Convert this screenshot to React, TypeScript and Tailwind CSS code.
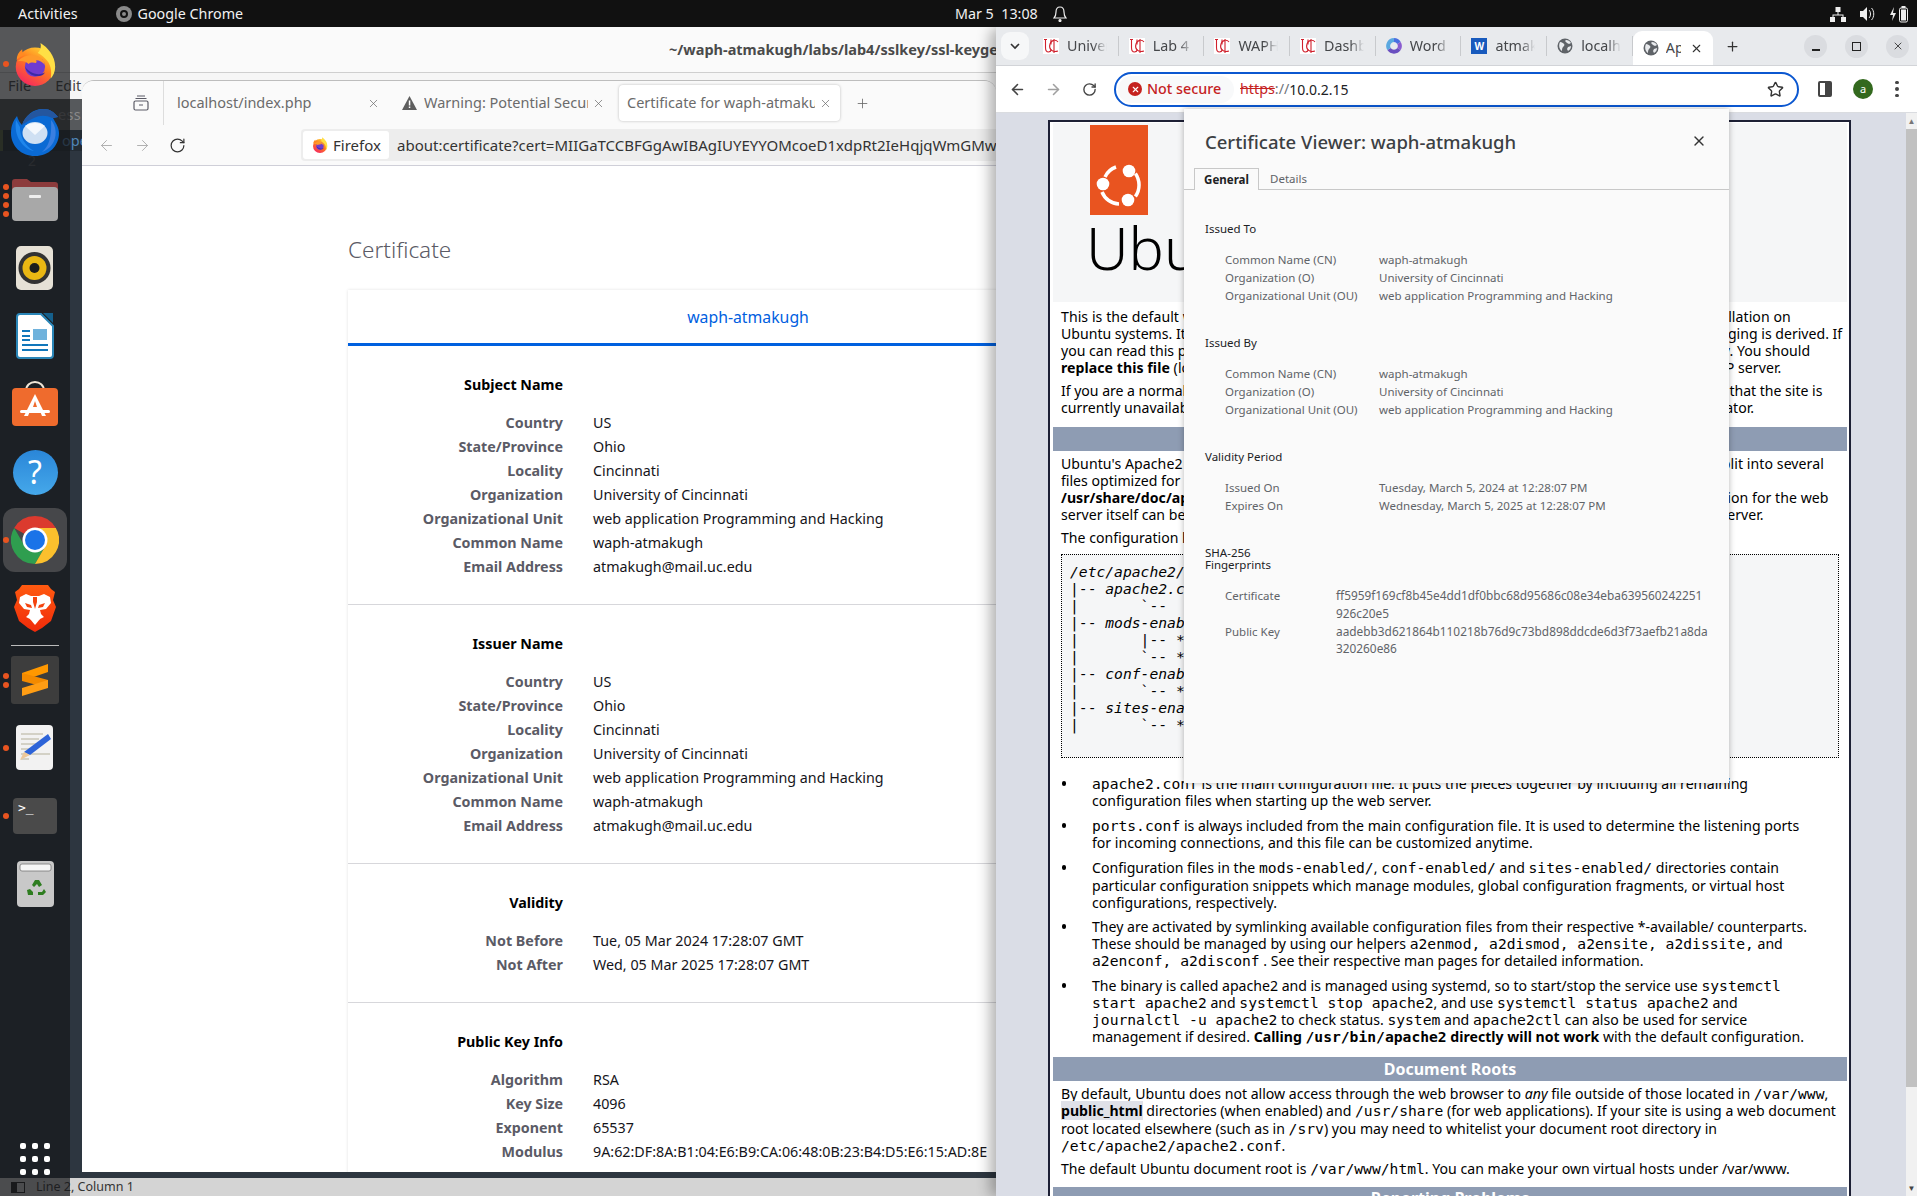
import { ArrowLeft, ArrowRight, Plus, RotateCw, Star, X } from "lucide-react"
import type { ReactNode } from "react"

function FirefoxIcon({ size }: { size: number }) {
    return (
        <svg width={size} height={size} viewBox="0 0 48 48">
            <defs>
                <linearGradient id="ffo" x1="0.85" y1="0.1" x2="0.3" y2="1">
                    <stop offset="0" stopColor="#ffcf30" />
                    <stop offset="0.45" stopColor="#ff7a1f" />
                    <stop offset="1" stopColor="#f5285e" />
                </linearGradient>
            </defs>
            <circle cx="24" cy="27" r="21" fill="url(#ffo)" />
            <path d="M30 1c8 5 16 14 16 26 0 5-2 10-5 13 2-8 0-17-6-22-3-3-6-5-8-6 3-3 4-7 3-11z" fill="#ffdf45" />
            <path d="M4 20c0-5 2-9 6-12 0 3 1 5 3 6-4 2-7 3-9 6z" fill="#ff8a22" />
            <circle cx="24" cy="27" r="11" fill="#6f3bd0" />
            <path d="M13 27c2 7 9 11 16 10 3 0 5-2 6-4-4 3-14 4-22-6z" fill="#3b2aa8" />
            <path d="M5 21c6-6 14-8 21-6 5 2 8 5 9 10-3-3-6-5-10-5 1 1 1 2 0 3-3-1-6-1-8 1-3-3-7-4-12-3z" fill="#ff9a2a" />
        </svg>
    )
}

function ChromeIcon({ size }: { size: number }) {
    return (
        <svg width={size} height={size} viewBox="0 0 48 48">
            <path d="M24 0A24 24 0 0 1 44.8 12H24A12 12 0 0 0 13.6 18L3.2 12A24 24 0 0 1 24 0z" fill="#db3a2e" />
            <path d="M3.2 12A24 24 0 0 0 24 48L34.4 30A12 12 0 0 1 13.6 30z" fill="#2f9e4f" />
            <path d="M44.8 12A24 24 0 0 1 24 48L34.4 30A12 12 0 0 0 24 12z" fill="#fbc02d" />
            <circle cx="24" cy="24" r="12.5" fill="#fff" />
            <circle cx="24" cy="24" r="10" fill="#1a73e8" />
        </svg>
    )
}

function UcIcon() {
    return (
        <svg width="16" height="16" viewBox="0 0 16 16">
            <rect width="16" height="16" fill="#fff" />
            <path d="M1 1.5h3M2.5 1.5v8c0 3 1.5 4.500 3 4.500s2.500-1 3-2.500M8 1.500v5" fill="none" stroke="#d0202c" strokeWidth="1.1" />
            <path d="M15 4c-2-2.500-6.500-2.500-8 2s1.500 9 8 7M11 1v14" fill="none" stroke="#d0202c" strokeWidth="1.1" />
        </svg>
    )
}

function GlobeIcon() {
    return (
        <svg width="16" height="16" viewBox="0 0 16 16">
            <circle cx="8" cy="8" r="7.5" fill="#5f6368" />
            <path d="M3 4c2 0 3 1 4 2s0 2-1 3-1 3-1 4C3 12 1 8 3 4zM9 2c2 0 4 1 5 3l-2 1-2-1-2-2zM11 9l3-1c0 2-1 4-3 5l-1-2z" fill="#e8eaed" />
        </svg>
    )
}

function ThunderbirdIcon() {
    return (
        <svg width="48" height="48" viewBox="0 0 48 48">
            <path d="M6 8c1 4 3 7 5 9C14 7 24 0 33 1c6 0 10 3 14 8l-5 1c2 4 6 9 6 15 0 13-10 23-24 23S0 38 0 25c0-7 2-12 6-17z" fill="#0a6ad4" />
            <path d="M11 17C14 7 24 1 33 1c6 0 10 3 14 8l-6 1c-6-3-12-3-18 0-5 2-9 5-12 7z" fill="#24569f" />
            <path d="M40 12c5 6 6 14 3 21-2 5-7 9-12 11 6-5 10-13 9-32z" fill="#3a7fe0" />
            <path d="M5 12c-1 8 0 15 4 21 3 5 8 9 14 10-9-5-14-14-14-24z" fill="#1f86ec" />
            <ellipse cx="24" cy="25" rx="12.5" ry="11" fill="#cfe0f3" />
            <path d="M14 18c6-4 14-4 20 0l-10 9z" fill="#f4f8fd" />
        </svg>
    )
}

function FilesIcon() {
    return (
        <svg width="46" height="42" viewBox="0 0 46 42">
            <path d="M3 0h12l4 3h24a3 3 0 0 1 3 3v10H0V3a3 3 0 0 1 3-3z" fill="#8c3b3c" />
            <rect y="8" width="46" height="34" rx="4" fill="#a8a8a8" />
            <rect x="17" y="16" width="12" height="3" rx="1" fill="#eee" />
        </svg>
    )
}

function RhythmboxIcon() {
    return (
        <svg width="38" height="44" viewBox="0 0 38 44">
            <rect width="37" height="44" rx="5" fill="#e6e1d6" />
            <circle cx="18.5" cy="22" r="16" fill="#333" />
            <circle cx="18.5" cy="22" r="12" fill="#eab713" />
            <circle cx="18.5" cy="22" r="5" fill="#1c1c1c" />
        </svg>
    )
}

function WriterIcon() {
    return (
        <svg width="38" height="46" viewBox="0 0 38 46">
            <path d="M4 1h21l12 12v29a3 3 0 0 1-3 3H4a3 3 0 0 1-3-3V4a3 3 0 0 1 3-3z" fill="#fff" stroke="#2a86b8" strokeWidth="2" />
            <path d="M27 0l10 10V0z" fill="#15608c" />
            <rect x="6" y="17" width="8" height="2" fill="#1177bb" />
            <rect x="6" y="22" width="8" height="2" fill="#1177bb" />
            <rect x="6" y="26" width="8" height="2" fill="#1177bb" />
            <rect x="17" y="16" width="14" height="11" fill="#6fb2dc" />
            <rect x="6" y="31" width="26" height="2" fill="#1177bb" />
            <rect x="6" y="36" width="26" height="2" fill="#1177bb" />
        </svg>
    )
}

function SoftwareIcon() {
    return (
        <svg width="46" height="46" viewBox="0 0 46 46">
            <path d="M14 10c0-12 18-12 18 0" fill="none" stroke="#f0e6d8" strokeWidth="2" />
            <rect y="7" width="46" height="38" rx="4" fill="#ef6b2d" />
            <path d="M23 13l-11 22h4l2-5h10l2 5h4z" fill="#fff" />
            <path d="M21 26l2-6 2 6z" fill="#ef6b2d" />
            <rect x="8" y="29" width="30" height="3" rx="1.5" fill="#fff" />
        </svg>
    )
}

function HelpIcon() {
    return (
        <div className="w-[45px] h-[45px] rounded-full bg-linear-to-b from-[#2a86d8] to-[#45a8ea] flex items-center justify-center text-white text-[32px] leading-none">?</div>
    )
}

function BraveIcon() {
    return (
        <svg width="42" height="48" viewBox="0 0 42 48">
            <defs>
                <linearGradient id="brv" x1="0" y1="0" x2="0" y2="1">
                    <stop offset="0" stopColor="#ff5a10" />
                    <stop offset="1" stopColor="#f02a0a" />
                </linearGradient>
            </defs>
            <path d="M8 1h26l3 4 4 3-2 8 3 7-5 14-9 7-7 4-7-4-9-7L0 23l3-7-2-8 4-3z" fill="url(#brv)" />
            <path d="M6 13l6-3 5 2h8l5-2 6 3 1 6-5 6-6 1 1 4 3 3-6 3h-6l-6-3 3-3 1-4-6-1-5-6z" fill="#fff" />
            <path d="M16 35h10l-5 6z" fill="#fff" />
            <path d="M11 19l6 2 1 3-5-1zM31 19l-6 2-1 3 5-1zM19 13h4v5l-2 7-2-7z" fill="#f4440f" />
        </svg>
    )
}

function SublimeIcon() {
    return (
        <div className="w-12 h-12 rounded-[3px] bg-[#3d3d3d] flex items-center justify-center">
            <svg width="26" height="32" viewBox="0 0 26 32">
                <path d="M0 9L26 0v8L0 17z" fill="#ff9800" />
                <path d="M0 9l26 7v8L0 17z" fill="#f38a00" />
                <path d="M0 24l26-8v8L0 32z" fill="#ff9d14" />
            </svg>
        </div>
    )
}

function GeditIcon() {
    return (
        <svg width="38" height="46" viewBox="0 0 38 46">
            <rect width="37" height="45" rx="4" fill="#f2f2f2" />
            <path d="M5 9h22M5 14h18M5 19h16M5 24h12M5 29h10M14 29h20M5 34h8" stroke="#c9c6b8" strokeWidth="1.6" />
            <path d="M32 9l3 5-21 16-6-3z" fill="#2c63d8" />
            <path d="M8 27l6 3-10 5z" fill="#edc89a" />
        </svg>
    )
}

function TerminalIcon() {
    return (
        <div className="w-[44px] h-9 rounded-[4px] bg-[#4a4a4a] text-white text-[13px] leading-none pl-[5px] pt-[3px] font-['DejaVu_Sans_Mono',monospace]">&gt;_</div>
    )
}

function TrashIcon() {
    return (
        <svg width="37" height="46" viewBox="0 0 37 46">
            <rect width="37" height="46" rx="4" fill="#c8c8c8" />
            <rect x="3" y="3" width="31" height="7" rx="2" fill="#f6f6f6" stroke="#777" strokeWidth="0.8" />
            <path d="M18 19l4 0 3 5-3 2-2-3-3 3-2-2zM10 29l3-1 3 3v3h-5zM27 28l2 3-3 3h-5v-3h4z" fill="#2e7d20" />
        </svg>
    )
}

type DockItem = { icon: ReactNode; dots: number; active?: boolean }

const dockTop: DockItem[] = [
    { icon: <FirefoxIcon size={44} />, dots: 1 },
    { icon: <ThunderbirdIcon />, dots: 0 },
    { icon: <FilesIcon />, dots: 4 },
    { icon: <RhythmboxIcon />, dots: 0 },
    { icon: <WriterIcon />, dots: 0 },
    { icon: <SoftwareIcon />, dots: 0 },
    { icon: <HelpIcon />, dots: 0 },
    { icon: <ChromeIcon size={48} />, dots: 1, active: true },
    { icon: <BraveIcon />, dots: 0 },
]

const dockBottom: DockItem[] = [
    { icon: <SublimeIcon />, dots: 2 },
    { icon: <GeditIcon />, dots: 1 },
    { icon: <TerminalIcon />, dots: 1 },
    { icon: <TrashIcon />, dots: 0 },
]

function DockSlot({ item }: { item: DockItem }) {
    return (
        <div className="relative h-[68px] w-full flex items-center justify-center">
            {item.active && <div className="absolute left-[3px] right-[3px] top-[2px] bottom-[2px] rounded-[12px] bg-[#46474a]" />}
            <div className="relative flex items-center justify-center">{item.icon}</div>
            {item.dots > 0 && (
                <div className="absolute left-[3px] top-0 bottom-0 flex flex-col justify-center gap-[3px]">
                    {Array.from({ length: item.dots }).map((_, i) => (
                        <div key={i} className="w-[6px] h-[6px] rounded-full bg-[#e95420]" />
                    ))}
                </div>
            )}
        </div>
    )
}

function Dock() {
    return (
        <div className="absolute left-0 top-0 bottom-0 w-[70px] bg-[#16181b]/[0.72] pt-[3px] flex flex-col">
            {dockTop.map((item, i) => (
                <DockSlot key={i} item={item} />
            ))}
            <div className="mx-[11px] mt-[3px] h-px bg-[#bbbbbb]" />
            {dockBottom.map((item, i) => (
                <DockSlot key={i} item={item} />
            ))}
            <div className="mt-auto mb-[21px] mx-auto grid grid-cols-3 gap-x-[6px] gap-y-[7px]">
                {Array.from({ length: 9 }).map((_, i) => (
                    <div key={i} className="w-[6px] h-[6px] rounded-[2px] bg-white" />
                ))}
            </div>
        </div>
    )
}

function TopBar() {
    return (
        <div className="h-[27px] shrink-0 bg-[#111111] text-[#f2f2f2] text-[14.3px] flex items-center relative">
            <span className="ml-[18px]">Activities</span>
            <div className="ml-[38px] w-4 h-4 rounded-full bg-[#8a8a8a] flex items-center justify-center">
                <div className="w-2 h-2 rounded-full border-2 border-[#111]" />
            </div>
            <span className="ml-[6px]">Google Chrome</span>
            <span className="absolute left-[955px]">Mar 5&nbsp;&nbsp;13:08</span>
            <svg className="absolute left-[1053px]" width="14" height="16" viewBox="0 0 14 16" fill="none" stroke="#eee" strokeWidth="1.2">
                <path d="M7 1c-3 0-4 2-4 5 0 3-1 5-2 6h12c-1-1-2-3-2-6 0-3-1-5-4-5z" />
                <circle cx="7" cy="14.5" r="1" fill="#eee" />
            </svg>
            <div className="ml-auto mr-[9px] flex items-center gap-[14px]">
                <svg width="16" height="16" viewBox="0 0 16 16" fill="#eee">
                    <rect x="5.5" y="1" width="5" height="5" />
                    <rect x="0" y="11" width="5" height="5" />
                    <rect x="11" y="11" width="5" height="5" />
                    <path d="M7.5 6h1v2.5h5V11h-1V9.5h-9V11h-1V8.5h5z" />
                </svg>
                <svg width="16" height="16" viewBox="0 0 16 16" fill="#eee">
                    <path d="M0 5h3l4-4v14l-4-4H0z" />
                    <path d="M9 4c2 2 2 6 0 8M11.5 2c3 3 3 9 0 12" stroke="#eee" fill="none" strokeWidth="1" />
                </svg>
                <svg width="18" height="18" viewBox="0 0 18 18" fill="#eee">
                    <path d="M4 2L0 10h3l-1 6 4-8H3z" />
                    <rect x="9.5" y="3" width="8" height="14" rx="1.5" fill="none" stroke="#eee" />
                    <rect x="11" y="4.5" width="5" height="11" />
                    <rect x="11.5" y="1" width="4" height="2" />
                </svg>
            </div>
        </div>
    )
}

function EditorWindow() {
    return (
        <div className="absolute inset-0 flex flex-col bg-[#2d3640]">
            <div className="h-[46px] shrink-0 bg-[#fafafa] border-b border-[#cfcfcf] flex items-center pl-[669px] font-bold text-[14.5px] text-[#4a4a4a] whitespace-nowrap">
                ~/waph-atmakugh/labs/lab4/sslkey/ssl-keygen
            </div>
            <div className="h-[26px] shrink-0 bg-[#f6f6f6] flex items-center gap-[24px] pl-[8px] text-[14.5px] text-[#444]">
                <span>File</span>
                <span>Edit</span>
            </div>
            <div className="h-[31px] shrink-0 bg-[#56595c] pl-[58px] flex items-center text-[14.5px] tracking-wide text-[#8a8a8a]">essi</div>
            <div className="h-[21px] shrink-0 bg-[#232b33] border-l-[3px] border-[#5a6a40] pl-[59px] flex items-center text-[14.5px] text-[#4f86b8]">ope</div>
            <div className="h-[18px] shrink-0 pl-[28px] flex items-center text-[14px] text-[#5a5f66]">2</div>
            <div className="flex-1" />
            <div className="h-[18px] shrink-0 bg-[#d4d4d4] pl-[11px] flex items-center text-[12.5px] text-[#333]">
                <div className="w-[14px] h-[11px] border border-[#222] flex">
                    <div className="w-[5px] bg-[#222]" />
                </div>
                <span className="ml-[11px]">Line 2, Column 1</span>
            </div>
        </div>
    )
}

function FirefoxTab({ label, warn, active, width }: { label: string; warn?: boolean; active?: boolean; width: string }) {
    return (
        <div className={`${width} h-[36px] shrink-0 flex items-center px-2 text-[14.5px] text-[#6b6b6b] whitespace-nowrap ${active ? "bg-white rounded-[4px] shadow-[0_0_3px_rgba(0,0,0,0.25)]" : ""}`}>
            {warn && (
                <svg className="mr-[7px] shrink-0" width="15" height="14" viewBox="0 0 15 14">
                    <path d="M7.5 0l7.5 14H0z" fill="#5e5e5e" />
                    <rect x="6.8" y="4.5" width="1.5" height="5" fill="#fff" />
                    <rect x="6.8" y="10.5" width="1.5" height="1.5" fill="#fff" />
                </svg>
            )}
            <span className="flex-1 overflow-hidden">{label}</span>
            <X className="ml-1 shrink-0 text-[#666]" size={13} strokeWidth={1.3} />
        </div>
    )
}

type Row = [string, string]

const nameRows: Row[] = [
    ["Country", "US"],
    ["State/Province", "Ohio"],
    ["Locality", "Cincinnati"],
    ["Organization", "University of Cincinnati"],
    ["Organizational Unit", "web application Programming and Hacking"],
    ["Common Name", "waph-atmakugh"],
    ["Email Address", "atmakugh@mail.uc.edu"],
]

function CertSection({ title, rows, last }: { title: string; rows: Row[]; last?: boolean }) {
    return (
        <div className={`pt-[27px] pb-[25px] ${last ? "" : "border-b border-[#d7d7db]"}`}>
            <div className="flex h-6 items-center">
                <div className="w-[215px] text-right font-bold text-black">{title}</div>
            </div>
            <div className="mt-[14px]">
                {rows.map(([k, v]) => (
                    <div key={k} className="flex h-6 items-center whitespace-nowrap">
                        <div className="w-[215px] shrink-0 text-right font-bold text-[#5b5b66]">{k}</div>
                        <div className="ml-[30px] text-[#15141a]">{v}</div>
                    </div>
                ))}
            </div>
        </div>
    )
}

function FirefoxWindow() {
    return (
        <div className="absolute left-[82px] top-[53px] w-[914px] h-[1092px] bg-white rounded-t-[12px] flex flex-col overflow-hidden border-t border-[#bdbdbd]">
            <div className="h-[44px] shrink-0 bg-[#fafafa] flex items-center">
                <div className="w-[82px] h-full flex items-center justify-end pr-[14px] border-r border-[#dddddd] shrink-0">
                    <svg width="16" height="16" viewBox="0 0 16 16" fill="none" stroke="#5b5b66" strokeWidth="1.2">
                        <rect x="1" y="6" width="14" height="9" rx="1.5" />
                        <path d="M2.5 3.5h11M4 1h8M6 10h4" />
                    </svg>
                </div>
                <FirefoxTab label="localhost/index.php" width="w-[219px] ml-[5px]" />
                <FirefoxTab label="Warning: Potential Security Risk Ahead" width="w-[219px] ml-[6px]" warn />
                <FirefoxTab label="Certificate for waph-atmakugh" width="w-[221px] ml-[6px]" active />
                <Plus className="ml-[15px] text-[#666]" size={15} strokeWidth={1.3} />
            </div>
            <div className="h-[41px] shrink-0 bg-[#fafafa] border-b border-[#cfcfd8] flex items-center">
                <ArrowLeft className="ml-[16px] text-[#aaaaaa]" size={17} strokeWidth={1.3} />
                <ArrowRight className="ml-[19px] text-[#aaaaaa]" size={17} strokeWidth={1.3} />
                <RotateCw className="ml-[18px] text-[#333]" size={17} strokeWidth={1.7} />
                <div className="ml-[115px] flex-1 h-[32px] bg-[#ededed] rounded-l-[4px] flex items-center pl-[2px] whitespace-nowrap overflow-hidden text-[15px] text-[#333]">
                    <div className="h-[28px] w-[86px] shrink-0 bg-white rounded-[3px] flex items-center pl-[9px] gap-[5px]">
                        <FirefoxIcon size={16} />
                        <span>Firefox</span>
                    </div>
                    <span className="ml-[8px]">about:certificate?cert=MIIGaTCCBFGgAwIBAgIUYEYYOMcoeD1xdpRt2IeHqjqWmGMw</span>
                </div>
            </div>
            <div className="flex-1 overflow-hidden pl-[266px] text-[14.3px]">
                <div className="pt-[66px] h-[124px] text-[22.5px] font-light leading-[36px] text-[#5b5b66]">Certificate</div>
                <div className="w-[800px] shadow-[0_0_3px_rgba(0,0,0,0.12)]">
                    <div className="h-[56px] pt-[2px] border-b-[3px] border-[#0060df] flex items-center justify-center text-[15.8px] text-[#0060df]">waph-atmakugh</div>
                    <CertSection title="Subject Name" rows={nameRows} />
                    <CertSection title="Issuer Name" rows={nameRows} />
                    <CertSection
                        title="Validity"
                        rows={[
                            ["Not Before", "Tue, 05 Mar 2024 17:28:07 GMT"],
                            ["Not After", "Wed, 05 Mar 2025 17:28:07 GMT"],
                        ]}
                    />
                    <CertSection
                        title="Public Key Info"
                        last
                        rows={[
                            ["Algorithm", "RSA"],
                            ["Key Size", "4096"],
                            ["Exponent", "65537"],
                            ["Modulus", "9A:62:DF:8A:B1:04:E6:B9:CA:06:48:0B:23:B4:D5:E6:15:AD:8E"],
                        ]}
                    />
                </div>
            </div>
        </div>
    )
}

const chromeTabs = [
    { icon: <UcIcon />, label: "University" },
    { icon: <UcIcon />, label: "Lab 4" },
    { icon: <UcIcon />, label: "WAPH" },
    { icon: <UcIcon />, label: "Dashboard" },
    {
        icon: (
            <svg width="16" height="18" viewBox="0 0 16 18" fill="none" strokeWidth="4">
                <path d="M8 3a6 6 0 0 1 5 3" stroke="#4a6ee0" />
                <path d="M13 6a6 6 0 0 1 0 6" stroke="#8a5cd0" />
                <path d="M13 12a6 6 0 0 1-10 0" stroke="#6a4fc0" />
                <path d="M3 12a6 6 0 0 1 5-9" stroke="#5aa8e0" />
            </svg>
        ),
        label: "Word",
    },
    {
        icon: (
            <div className="w-4 h-4 bg-[#185abd] flex items-center justify-center text-white text-[10px] font-bold leading-none">W</div>
        ),
        label: "atmakugh",
    },
    { icon: <GlobeIcon />, label: "localhost" },
]

function ChromeTabs() {
    return (
        <div className="h-[39px] shrink-0 bg-[#e8eaed] flex items-center border-b border-[#d2d4d8]">
            <div className="ml-[5px] w-[28px] h-[28px] rounded-[9px] bg-[#f6f7f8] flex items-center justify-center">
                <svg width="10" height="7" viewBox="0 0 10 7" fill="none" stroke="#333" strokeWidth="1.6">
                    <path d="M1 1l4 4 4-4" />
                </svg>
            </div>
            <div className="ml-[4px] flex items-center">
                {chromeTabs.map((t, i) => (
                    <div key={i} className="w-[85.7px] h-5 flex items-center pl-[10px] border-r border-[#c8cacd] text-[14.3px] text-[#45474a]">
                        <div className="w-4 shrink-0 flex justify-center">{t.icon}</div>
                        <span className="ml-[8px] w-[40px] overflow-hidden whitespace-nowrap [mask-image:linear-gradient(90deg,#000_65%,transparent)]">{t.label}</span>
                    </div>
                ))}
            </div>
            <div className="self-end h-[34px] w-[80px] bg-white rounded-t-[9px] flex items-center pl-[10px] text-[14.3px] text-[#45474a]">
                <GlobeIcon />
                <span className="ml-[7px] w-[15px] overflow-hidden whitespace-nowrap">Apache2</span>
                <X className="ml-[9px] text-[#333]" size={13} strokeWidth={2} />
            </div>
            <Plus className="ml-[12px] text-[#333]" size={15} strokeWidth={2} />
            <div className="ml-auto mr-[8px] flex gap-[18px]">
                <div className="w-[23px] h-[23px] rounded-full bg-[#dadce0] flex items-center justify-center">
                    <div className="w-[8px] h-[1.5px] mt-[8px] bg-[#222]" />
                </div>
                <div className="w-[23px] h-[23px] rounded-full bg-[#dadce0] flex items-center justify-center">
                    <div className="w-[9px] h-[9px] border border-[#222]" />
                </div>
                <div className="w-[23px] h-[23px] rounded-full bg-[#dadce0] flex items-center justify-center">
                    <X size={12} strokeWidth={1.6} className="text-[#222]" />
                </div>
            </div>
        </div>
    )
}

function ChromeToolbar() {
    return (
        <div className="h-[47px] shrink-0 bg-white border-b border-[#dadce0] flex items-center">
            <ArrowLeft className="ml-[13px] text-[#444]" size={17} strokeWidth={2.2} />
            <ArrowRight className="ml-[19px] text-[#a0a0a0]" size={17} strokeWidth={2.2} />
            <RotateCw className="ml-[20px] text-[#444]" size={15} strokeWidth={2.2} />
            <div className="ml-[17px] w-[685px] h-[35px] rounded-full border-[2.5px] border-[#0b57d0] flex items-center text-[14.3px] whitespace-nowrap">
                <div className="ml-[2px] h-[27px] w-[116px] rounded-full bg-[#f8f9fa] flex items-center pl-[10px]">
                    <div className="w-[14px] h-[14px] rounded-full bg-[#c5221f] flex items-center justify-center">
                        <X size={9} strokeWidth={3} className="text-white" />
                    </div>
                    <span className="ml-[5px] font-medium text-[#c5221f]">Not secure</span>
                </div>
                <span className="ml-[6px] text-[#c5221f] line-through">https</span>
                <span className="text-[#70757a]">://</span>
                <span className="text-[#202124] text-[14px]">10.0.2.15</span>
                <Star className="ml-auto mr-[13px] text-[#333]" size={17} strokeWidth={2} />
            </div>
            <div className="ml-[19px] w-[14px] h-[16px] border-2 border-[#444] rounded-[2px] flex justify-end">
                <div className="w-[5px] bg-[#444]" />
            </div>
            <div className="ml-[21px] w-5 h-5 rounded-full bg-[#33691e] text-white text-[11px] flex items-center justify-center">a</div>
            <div className="ml-[22px] flex flex-col gap-[3px]">
                <div className="w-[3.5px] h-[3.5px] rounded-full bg-[#444]" />
                <div className="w-[3.5px] h-[3.5px] rounded-full bg-[#444]" />
                <div className="w-[3.5px] h-[3.5px] rounded-full bg-[#444]" />
            </div>
        </div>
    )
}

function Tt({ children }: { children: ReactNode }) {
    return <span className="font-['DejaVu_Sans_Mono',monospace] text-[14.67px]">{children}</span>
}

function L({ children, className = "" }: { children: ReactNode; className?: string }) {
    return <span className={`block whitespace-nowrap ${className}`}>{children}</span>
}

function Band({ children }: { children: ReactNode }) {
    return <div className="h-6 bg-[#8e9cb3] text-white font-bold text-[16px] flex items-center justify-center">{children}</div>
}

function Bullet({ children, className = "" }: { children: ReactNode; className?: string }) {
    return (
        <li className={`flex ${className}`}>
            <div className="w-[30px] shrink-0 pt-[6px]">
                <div className="w-[4px] h-[5px] rounded-full bg-black" />
            </div>
            <div>{children}</div>
        </li>
    )
}

function ApachePage() {
    return (
        <div className="flex-1 min-w-0 overflow-hidden pt-[7px] bg-[#dadde6]">
            <div className="ml-[52px] w-[803px] border-2 border-[#1d2035] bg-white pl-[3px] pr-[2px] pt-[1px] text-[14.1px] leading-[17.1px] text-black">
                <div className="h-[179px] bg-[#f5f6f7] pl-[37px] pt-[2px] overflow-hidden">
                    <div className="w-[58px] h-[90px] bg-[#e95420] pt-[37px] flex justify-center">
                        <svg width="46" height="46" viewBox="0 0 46 46" fill="none">
                            <path d="M39.4 11.5A20 20 0 0 1 39.4 34.5M9 15A19 19 0 0 1 20 5M6 30A19 19 0 0 0 23 42" stroke="#fff" strokeWidth="3.5" />
                            <circle cx="33" cy="9" r="6.3" fill="#fff" />
                            <circle cx="7" cy="22" r="6.3" fill="#fff" />
                            <circle cx="32" cy="38" r="6.3" fill="#fff" />
                        </svg>
                    </div>
                    <div className="-mt-[3px] -ml-[4px] text-[59px] font-light leading-[70px] whitespace-nowrap">Ubuntu</div>
                </div>
                <div className="px-[8px] pt-[6px] pb-[10px]">
                    <p>
                        <L className="tracking-[0.06px]">This is the default welcome page used to test the correct operation of the Apache2 server after installation on</L>
                        <L>Ubuntu systems. It is based on the equivalent page on Debian, from which the Ubuntu Apache packaging is derived. If</L>
                        <L>you can read this page, it means that the Apache HTTP server installed at this site is working properly. You should</L>
                        <L className="tracking-[0.06px]"><b>replace this file</b> (located at <Tt>/var/www/html/index.html</Tt>) before continuing to operate your HTTP server.</L>
                    </p>
                    <p className="mt-[6px]">
                        <L className="tracking-[-0.03px]">If you are a normal user of this web site and don't know what this page is about, this probably means that the site is</L>
                        <L>currently unavailable due to maintenance. If the problem persists, please contact the site's administrator.</L>
                    </p>
                </div>
                <Band>Configuration Overview</Band>
                <div className="px-[8px] pt-[4px]">
                    <p>
                        <L className="tracking-[0.07px]">Ubuntu's Apache2 default configuration is different from the upstream default configuration, and split into several</L>
                        <L>files optimized for interaction with Ubuntu tools. The configuration system is fully documented in</L>
                        <L className="tracking-[0.05px]"><b>/usr/share/doc/apache2/README.Debian.gz</b>. Refer to this for the full documentation. Documentation for the web</L>
                        <L>server itself can be found by accessing the manual if the apache2-doc package was installed on this server.</L>
                    </p>
                    <p className="mt-[6px]">The configuration layout for an Apache2 web server installation on Ubuntu systems is as follows:</p>
                    <pre className="mt-[8px] h-[204px] border border-dotted border-black bg-[#f5f6f7] pl-[8px] pt-[8px] font-['DejaVu_Sans_Mono',monospace] text-[14.67px] leading-[17px]">
                        <i>/etc/apache2/</i>{"\n"}
                        {"|-- "}<i>apache2.conf</i>{"\n"}
                        {"|       `--  ports.conf\n"}
                        {"|-- "}<i>mods-enabled</i>{"\n"}
                        {"|       |-- *.load\n"}
                        {"|       `-- *.conf\n"}
                        {"|-- "}<i>conf-enabled</i>{"\n"}
                        {"|       `-- *.conf\n"}
                        {"|-- "}<i>sites-enabled</i>{"\n"}
                        {"|       `-- *.conf"}
                    </pre>
                    <ul className="mt-[17px] pl-[1px]">
                        <Bullet>
                            <L><Tt>apache2.conf</Tt> is the main configuration file. It puts the pieces together by including all remaining</L>
                            <L>configuration files when starting up the web server.</L>
                        </Bullet>
                        <Bullet className="mt-[8px]">
                            <L><Tt>ports.conf</Tt> is always included from the main configuration file. It is used to determine the listening ports</L>
                            <L>for incoming connections, and this file can be customized anytime.</L>
                        </Bullet>
                        <Bullet className="mt-[8px]">
                            <L>Configuration files in the <Tt>mods-enabled/</Tt>, <Tt>conf-enabled/</Tt> and <Tt>sites-enabled/</Tt> directories contain</L>
                            <L>particular configuration snippets which manage modules, global configuration fragments, or virtual host</L>
                            <L>configurations, respectively.</L>
                        </Bullet>
                        <Bullet className="mt-[7px]">
                            <L>They are activated by symlinking available configuration files from their respective *-available/ counterparts.</L>
                            <L>These should be managed by using our helpers <Tt>a2enmod, a2dismod, a2ensite, a2dissite,</Tt> and</L>
                            <L><Tt>a2enconf, a2disconf</Tt> . See their respective man pages for detailed information.</L>
                        </Bullet>
                        <Bullet className="mt-[8px]">
                            <L>The binary is called apache2 and is managed using systemd, so to start/stop the service use <Tt>systemctl</Tt></L>
                            <L><Tt>start apache2</Tt> and <Tt>systemctl stop apache2</Tt>, and use <Tt>systemctl status apache2</Tt> and</L>
                            <L><Tt>journalctl -u apache2</Tt> to check status. <Tt>system</Tt> and <Tt>apache2ctl</Tt> can also be used for service</L>
                            <L>management if desired. <b>Calling <Tt>/usr/bin/apache2</Tt> directly will not work</b> with the default configuration.</L>
                        </Bullet>
                    </ul>
                </div>
                <div className="mt-[12px]">
                    <Band>Document Roots</Band>
                </div>
                <div className="px-[8px] pt-[4px]">
                    <p>
                        <L>By default, Ubuntu does not allow access through the web browser to <i>any</i> file outside of those located in <Tt>/var/www</Tt>,</L>
                        <L><b className="bg-[#dfe1e8]">public_html</b> directories (when enabled) and <Tt>/usr/share</Tt> (for web applications). If your site is using a web document</L>
                        <L>root located elsewhere (such as in <Tt>/srv</Tt>) you may need to whitelist your document root directory in</L>
                        <L><Tt>/etc/apache2/apache2.conf</Tt>.</L>
                    </p>
                    <p className="mt-[6px]">The default Ubuntu document root is <Tt>/var/www/html</Tt>. You can make your own virtual hosts under /var/www.</p>
                </div>
                <div className="mt-[10px]">
                    <Band>Reporting Problems</Band>
                </div>
            </div>
        </div>
    )
}

function ViewerRow({ label, value }: { label: string; value: string }) {
    return (
        <div className="flex h-[18px] items-center whitespace-nowrap">
            <div className="w-[154px] shrink-0">{label}</div>
            <div>{value}</div>
        </div>
    )
}

function ViewerGroup({ title, rows, height }: { title: string; rows: Row[]; height: string }) {
    return (
        <div className={height}>
            <div className="h-[18px] flex items-center text-[#202124]">{title}</div>
            <div className="mt-[13px] pl-[20px] text-[#5f6368]">
                {rows.map(([k, v]) => (
                    <ViewerRow key={k} label={k} value={v} />
                ))}
            </div>
        </div>
    )
}

const viewerName: Row[] = [
    ["Common Name (CN)", "waph-atmakugh"],
    ["Organization (O)", "University of Cincinnati"],
    ["Organizational Unit (OU)", "web application Programming and Hacking"],
]

function CertViewer() {
    return (
        <div className="absolute left-[188px] top-[82px] w-[545px] h-[674px] bg-[#fafafa] shadow-[0_0_6px_rgba(0,0,0,0.3)] text-[11.5px]">
            <div className="h-[59px] flex items-center justify-between pl-[21px] pr-[22px]">
                <span className="mt-[7px] text-[18.5px] font-medium text-[#3c4043] whitespace-nowrap">Certificate Viewer: waph-atmakugh</span>
                <X className="mt-[4px] text-[#333]" size={16} strokeWidth={2} />
            </div>
            <div className="h-[22px] border-b border-[#c8c8c8] flex pl-[10px]">
                <div className="w-[65px] h-[22px] bg-[#fafafa] border border-b-0 border-[#c8c8c8] flex items-center justify-center font-bold text-[#202124]">General</div>
                <div className="ml-[11px] h-[22px] flex items-center text-[#5f6368]">Details</div>
            </div>
            <div className="pt-[30px] pl-[21px]">
                <ViewerGroup title="Issued To" rows={viewerName} height="h-[114px]" />
                <ViewerGroup title="Issued By" rows={viewerName} height="h-[114px]" />
                <ViewerGroup
                    title="Validity Period"
                    height="h-[99px]"
                    rows={[
                        ["Issued On", "Tuesday, March 5, 2024 at 12:28:07 PM"],
                        ["Expires On", "Wednesday, March 5, 2025 at 12:28:07 PM"],
                    ]}
                />
                <div className="leading-[12px] text-[#202124]">
                    SHA-256
                    <br />
                    Fingerprints
                </div>
                <div className="mt-[16px] pl-[20px] text-[#5f6368] leading-[17.8px]">
                    <div className="flex">
                        <div className="w-[111px] shrink-0">Certificate</div>
                        <div className="text-[11.85px]">
                            ff5959f169cf8b45e4dd1df0bbc68d95686c08e34eba639560242251
                            <br />
                            926c20e5
                        </div>
                    </div>
                    <div className="flex">
                        <div className="w-[111px] shrink-0">Public Key</div>
                        <div className="text-[11.85px]">
                            aadebb3d621864b110218b76d9c73bd898ddcde6d3f73aefb21a8da
                            <br />
                            320260e86
                        </div>
                    </div>
                </div>
            </div>
        </div>
    )
}

function ChromeWindow() {
    return (
        <div className="absolute left-[996px] top-0 bottom-0 right-0 flex flex-col rounded-tl-[10px] overflow-visible shadow-[-6px_0_14px_rgba(0,0,0,0.3)] bg-white">
            <ChromeTabs />
            <ChromeToolbar />
            <div className="flex-1 min-h-0 flex">
                <ApachePage />
                <div className="w-[11px] shrink-0 bg-[#f1f1f1] flex flex-col">
                    <div className="h-[16px] flex items-center justify-center text-[8px] text-[#777]">▲</div>
                    <div className="h-[958px] bg-[#c1c1c1]" />
                    <div className="mt-auto h-[16px] flex items-center justify-center text-[8px] text-[#444]">▼</div>
                </div>
            </div>
            <CertViewer />
        </div>
    )
}

export default function App() {
    return (
        <div className="w-[1917px] h-[1196px] overflow-hidden flex flex-col font-['Noto_Sans',sans-serif] bg-[#2d3640]">
            <TopBar />
            <div className="relative flex-1 min-h-0 overflow-hidden">
                <EditorWindow />
                <FirefoxWindow />
                <ChromeWindow />
                <Dock />
            </div>
        </div>
    )
}
